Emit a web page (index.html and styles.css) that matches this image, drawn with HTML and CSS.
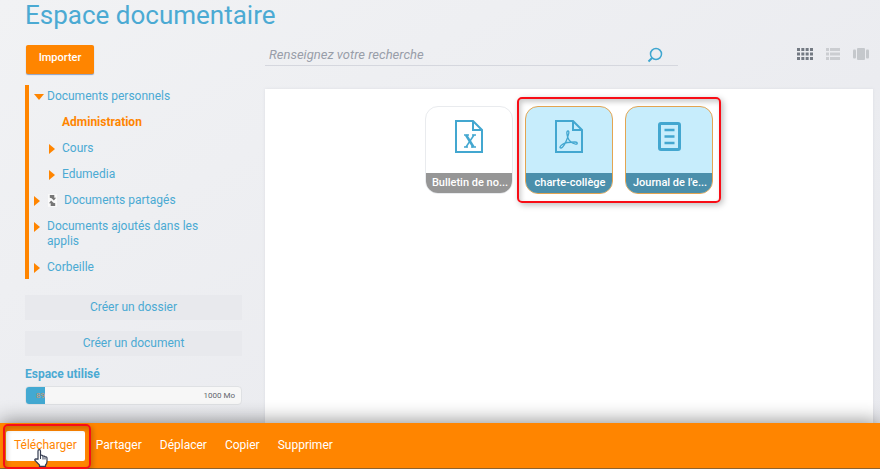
FILE: index.html
```html
<!DOCTYPE html>
<html lang="fr">
<head>
<meta charset="utf-8">
<meta name="viewport" content="width=device-width, initial-scale=1">
<title>Espace documentaire</title>
<link rel="stylesheet" href="styles.css">
</head>
<body>
<main class="workspace">
  <h1 class="title">Espace documentaire</h1>
  <div class="columns">
    <aside class="sidebar">
      <button class="import" type="button">Importer</button>
      <nav class="tree">
        <a class="node open" href="#"><span class="arrow"></span>Documents personnels</a>
        <a class="node child current" href="#">Administration</a>
        <a class="node child" href="#"><span class="arrow"></span>Cours</a>
        <a class="node child" href="#"><span class="arrow"></span>Edumedia</a>
        <a class="node" href="#"><span class="arrow"></span><svg class="share" viewBox="0 0 10 14" aria-hidden="true"><path d="M0 0h10v14H0z" fill="#fafafa"/><path d="M2 1h5v3h2L6.500 7 4 4.500 2 4zM8 13H3v-3H1l2.500-3L6 9.500l2 .5z" fill="#777"/></svg>Documents partagés</a>
        <a class="node" href="#"><span class="arrow"></span>Documents ajoutés dans les applis</a>
        <a class="node" href="#"><span class="arrow"></span>Corbeille</a>
      </nav>
      <button class="create" type="button">Créer un dossier</button>
      <button class="create" type="button">Créer un document</button>
      <h2 class="quota-title">Espace utilisé</h2>
      <div class="quota"><div class="quota-used">89</div><span class="quota-max">1000 Mo</span></div>
    </aside>
    <section class="content">
      <div class="toolbar">
        <form class="search">
          <input class="search-input" type="text" placeholder="Renseignez votre recherche" aria-label="Renseignez votre recherche">
          <button class="search-button" type="button" aria-label="Rechercher"><svg width="16" height="16" viewBox="0 0 16 16" fill="none" stroke="#3fa6d0"><circle cx="9" cy="7" r="5.5" stroke-width="1.5"/><path d="M5 11l-3.500 3.500" stroke-width="2"/></svg></button>
        </form>
        <div class="views">
          <button class="view" type="button" aria-label="Icônes"><svg width="16" height="12" viewBox="0 0 16 12" fill="none" stroke="#737982" stroke-width="3" stroke-dasharray="3 1.330"><path d="M0 1.500h16M0 6h16M0 10.500h16"/></svg></button>
          <button class="view" type="button" aria-label="Liste"><svg width="14" height="12" viewBox="0 0 14 12" fill="#cbcdd1"><path d="M0 0h3v3H0zM4 0h10v3H4zM0 4.500h3v3H0zM4 4.500h10v3H4zM0 9h3v3H0zM4 9h10v3H4z"/></svg></button>
          <button class="view" type="button" aria-label="Carrousel"><svg width="16" height="12" viewBox="0 0 16 12" fill="#c5c8cc"><rect y="1.500" width="3" height="9" rx="1"/><rect x="4" width="8" height="12" rx="1"/><rect x="13" y="1.500" width="3" height="9" rx="1"/></svg></button>
        </div>
      </div>
      <div class="panel">
        <article class="card">
          <svg class="icon" viewBox="0 0 28 33" fill="none" stroke="#43a7d0" stroke-width="2"><path d="M1 1h17l9 9v22H1zM18 1v9h9"/><path d="M9 15h5M17 15h4M9 27h4M16 27h5" stroke-width="1.500"/><path d="M11 15l7.500 12" stroke-width="2.500"/><path d="M19 15l-8 12" stroke-width="1.500"/></svg>
          <span class="name">Bulletin de no...</span>
        </article>
        <div class="selection">
          <article class="card selected">
            <svg class="icon" viewBox="0 0 28 33" fill="none" stroke="#43a7d0" stroke-width="2"><path d="M1 1h17l9 9v22H1zM18 1v9h9"/><path d="M13 11c-2 0-1 4 0 7s4 5 7 6 3-2 0-2-9 0-12 2-4 4-2 4 5-6 6-9 3-8 1-8z" stroke-width="1.300"/></svg>
            <span class="name">charte-collège</span>
          </article>
          <article class="card selected">
            <svg class="icon" viewBox="0 0 28 33" fill="none" stroke="#43a7d0"><rect x="4.500" y="3.500" width="20" height="26" rx="1.500" stroke-width="3"/><path d="M9.500 10h10M9.500 16.500h10M9.500 23h10" stroke-width="2.500"/></svg>
            <span class="name">Journal de l'e...</span>
          </article>
        </div>
      </div>
    </section>
  </div>
</main>
<footer class="actions">
  <button class="action active" type="button">Télécharger<svg class="pointer" width="14" height="18" viewBox="0 0 14 18" aria-hidden="true"><path d="M4 10V2q0-1.300 1.200-1.300T6.500 2v4.500q2-.8 2.500.7 1.500-.6 2 .7 2-.4 2 1.300v3.300q0 2-1.500 3.500v1.300H5.500V16L1 11.500q-.7-1.500 1-1.700z" fill="#fff" stroke="#333b50" stroke-width="1.200"/><path d="M6.500 7v3M9 7.500v3M11 8.500v2" stroke="#333b50"/></svg></button>
  <button class="action" type="button">Partager</button>
  <button class="action" type="button">Déplacer</button>
  <button class="action" type="button">Copier</button>
  <button class="action" type="button">Supprimer</button>
</footer>
</body>
</html>
```
FILE: styles.css
```css
* { box-sizing: border-box; }

body {
  margin: 0;
  min-height: 100vh;
  display: flex;
  flex-direction: column;
  background: linear-gradient(150deg, #f1f2f4, #ebecf0 60%, #e8e9ee);
  font: 12px/15px Roboto, sans-serif;
  color: #4baad3;
}

button, input { font: inherit; color: inherit; border: 0; padding: 0; background: none; }
a { color: inherit; text-decoration: none; }
svg { display: block; }

.workspace {
  flex: 1;
  display: flex;
  flex-direction: column;
  padding: 0 7px 0 25px;
}

.title { margin: 0; font-size: 26px; line-height: 30px; font-weight: 400; }

.columns { flex: 1; display: flex; gap: 23px; padding-top: 14px; }

.sidebar { width: 217px; flex: none; }

.import {
  display: block;
  width: 68px;
  height: 29px;
  margin: 1px 0 11px 1px;
  padding-bottom: 4px;
  border-radius: 2px;
  background: #ff8500;
  color: #fff;
  font-size: 11px;
  font-weight: 500;
  box-shadow: 0 1px 1px #8f9fc0;
}

.tree {
  display: flex;
  flex-direction: column;
  gap: 11px;
  border-left: 4px solid #ff8500;
  padding: 4px 35px 4px 18px;
  margin-bottom: 16px;
}

.node { position: relative; display: flex; align-items: center; }
.child { margin-left: 15px; }
.current { color: #ff8500; font-weight: 700; }

.arrow {
  position: absolute;
  left: -13px;
  top: 3px;
  border: solid transparent;
  border-width: 5px 0 5px 6px;
  border-left-color: #ff8500;
}
.open .arrow {
  top: 5px;
  border-width: 6px 5px 0;
  border-color: #ff8500 transparent transparent;
}
.share { width: 9px; height: 13px; margin: 0 7px 0 1px; }

.create {
  display: block;
  width: 100%;
  height: 25px;
  margin-bottom: 11px;
  background: #e8e9ed;
}

.quota-title { margin: 0 0 4px; font-size: 12px; line-height: 15px; font-weight: 700; }
.quota {
  display: flex;
  align-items: center;
  justify-content: space-between;
  height: 19px;
  border: 1px solid #dfe1e4;
  border-radius: 4px;
  background: #f7f7f7;
  overflow: hidden;
  font-size: 8px;
}
.quota-used {
  width: 19px;
  line-height: 19px;
  padding-left: 10px;
  background: #43a9d2;
  color: #d89568;
}
.quota-max { padding-right: 6px; color: #63666d; }

.content { flex: 1; min-width: 0; display: flex; flex-direction: column; }

.toolbar { display: flex; justify-content: space-between; align-items: flex-start; }
.search {
  width: 68%;
  height: 22px;
  display: flex;
  align-items: center;
  border-bottom: 1px solid #d5d7de;
}
.search-input { flex: 1; min-width: 0; padding-left: 4px; font-size: 13px; font-style: italic; outline: 0; }
.search-input::placeholder { color: #999ea9; opacity: 1; }
.search-button { margin-right: 15px; }
.views { display: flex; align-items: center; gap: 13px; height: 20px; padding-right: 4px; }

.panel {
  flex: 1;
  display: flex;
  justify-content: center;
  align-items: flex-start;
  gap: 12px;
  margin-top: 23px;
  padding-top: 17px;
  background: #fff;
  box-shadow: 0 0 3px #dcdee3;
}

.selection { position: relative; display: flex; gap: 12px; }
.selection::after {
  content: "";
  position: absolute;
  inset: -9px -8px;
  border: 2px solid #f80d16;
  border-radius: 5px;
  box-shadow: 2px 2px 6px #0004, inset 2px 3px 5px #0003;
}

.card {
  width: 88px;
  height: 88px;
  display: flex;
  flex-direction: column;
  justify-content: space-between;
  align-items: center;
  border: 1px solid #e9ebee;
  border-radius: 13px;
  overflow: hidden;
}
.icon { width: 28px; height: 33px; margin-top: 13px; }
.name {
  width: 100%;
  padding-left: 2px;
  background: #969696;
  color: #fff;
  font-size: 11px;
  line-height: 20px;
  font-weight: 500;
  text-align: center;
  white-space: nowrap;
}
.selected { border-color: #e3a552; background: #c7edfc; }
.selected .name { background: #4b8fab; }

.actions {
  position: relative;
  display: flex;
  align-items: center;
  gap: 18px;
  height: 46px;
  padding: 0 6px;
  background: #ff8500;
  border-bottom: 1px solid #8d6330;
  box-shadow: 0 -1px 20px #0007;
  color: #fff;
}
.action { height: 30px; white-space: nowrap; }
.active {
  position: relative;
  margin-right: -7px;
  padding: 0 8px;
  border-radius: 2px;
  background: #fff;
  color: #ff8500;
}
.active::before {
  content: "";
  position: absolute;
  inset: -7px -6px -8px -3px;
  border: 2px solid #f80d16;
  border-radius: 5px;
  box-shadow: 2px 2px 5px #0003, inset 2px 3px 5px #0003;
}
.pointer { position: absolute; left: 28px; top: 18px; }
```
